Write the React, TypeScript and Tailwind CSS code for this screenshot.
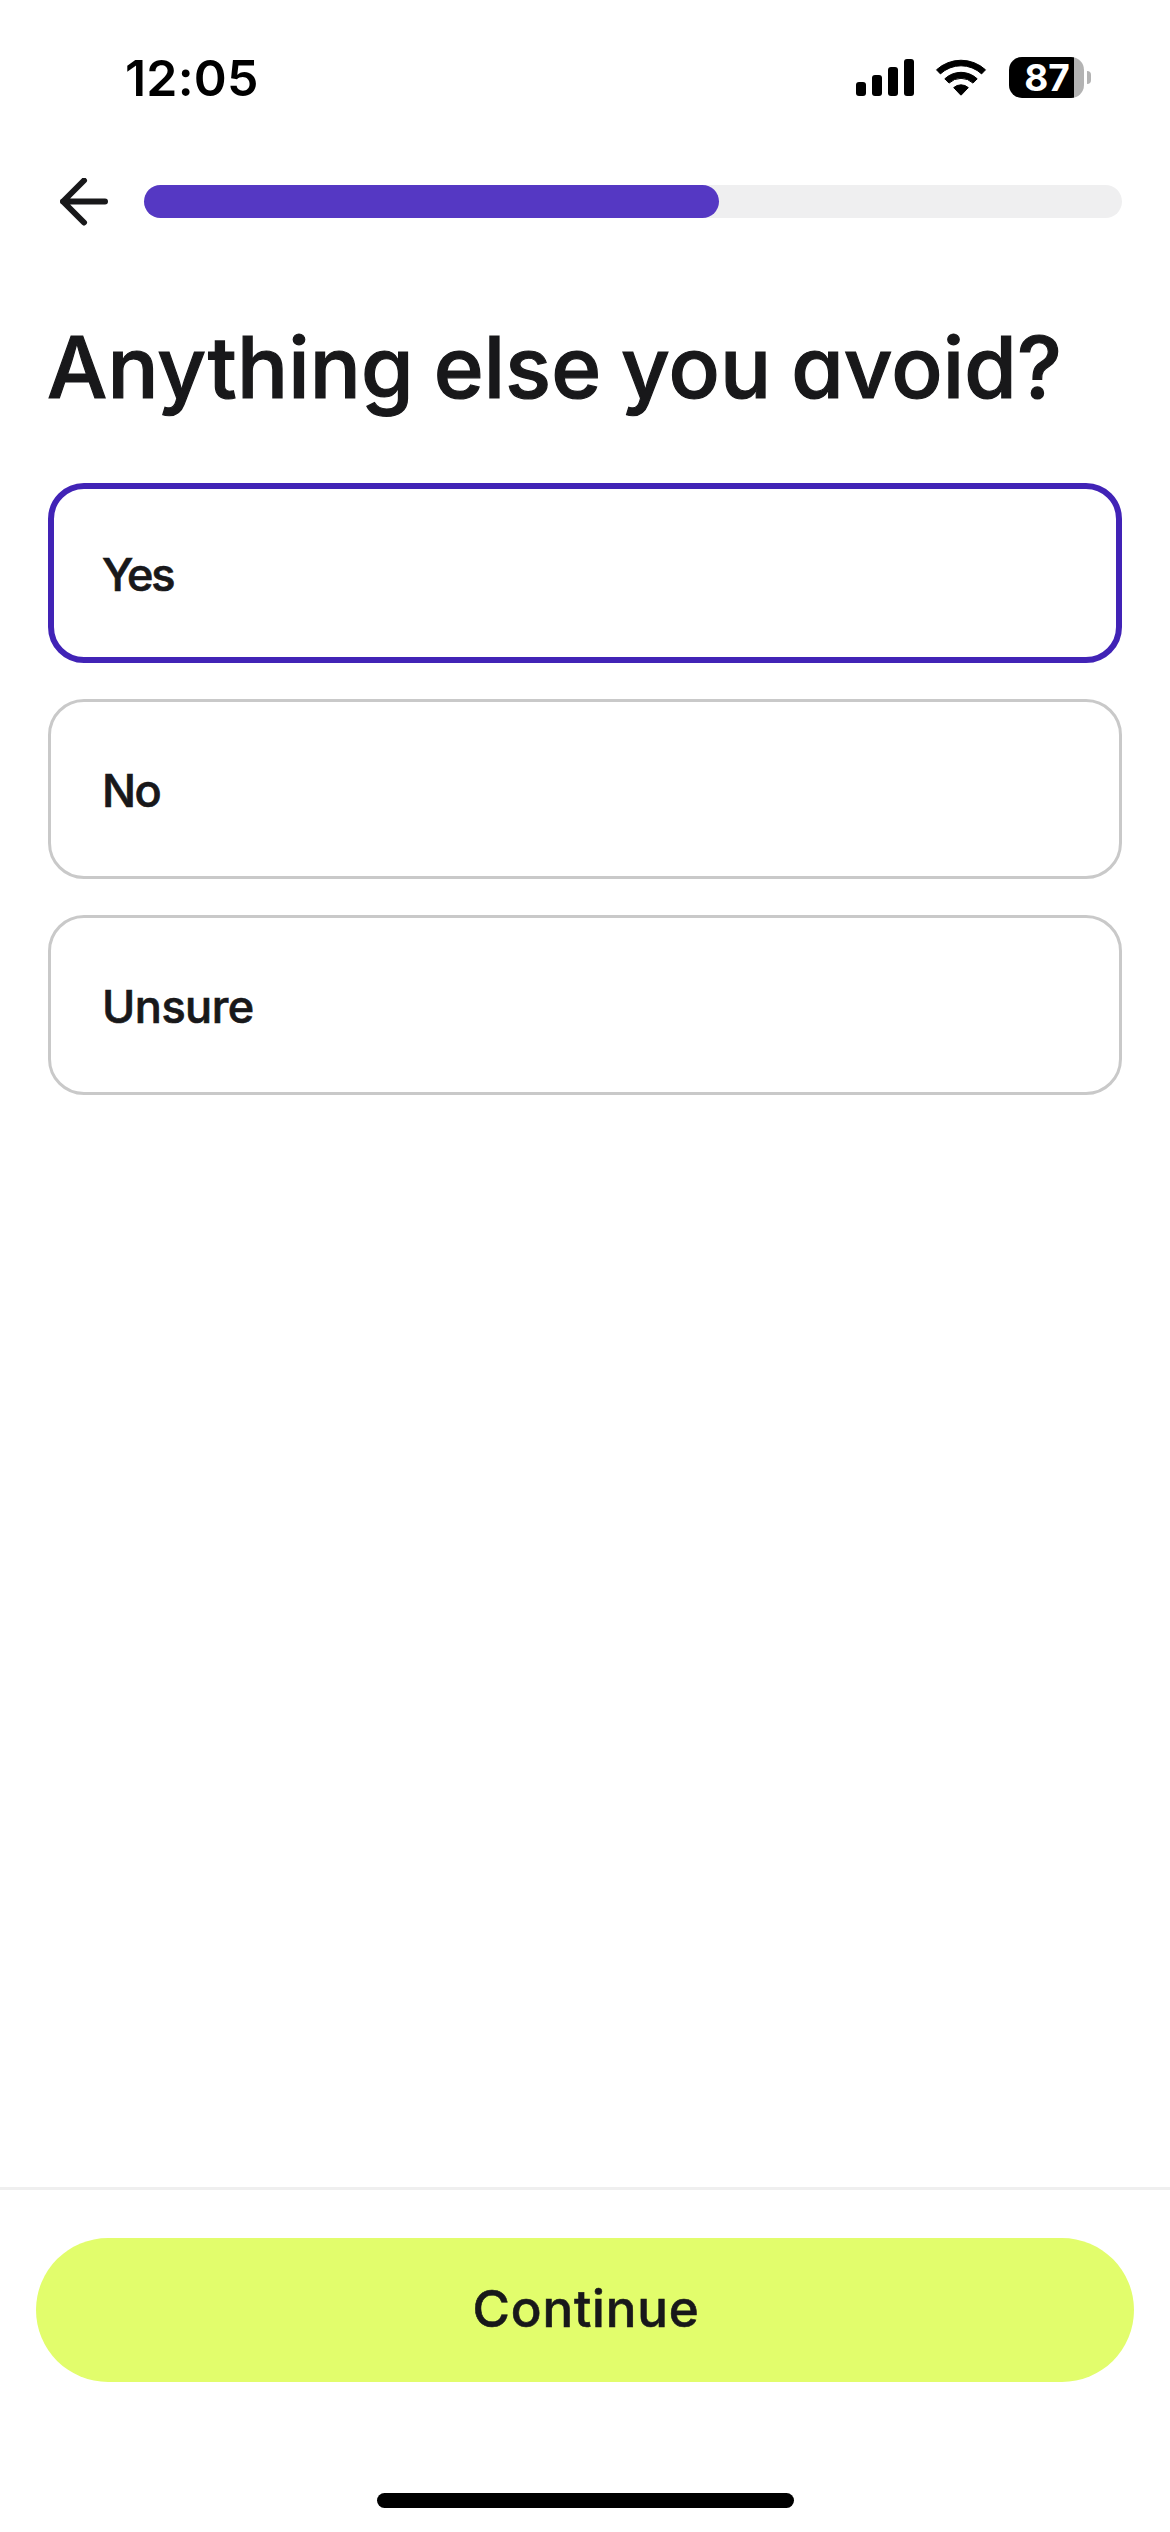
const options = [
  { label: "Yes", selected: true, tracking: "tracking-[-2.3px]" },
  { label: "No", selected: false, tracking: "tracking-[-1.6px]" },
  { label: "Unsure", selected: false, tracking: "tracking-[-0.5px]" },
];

function SignalIcon() {
  return (
    <svg className="h-[37px] w-[58px]" viewBox="0 0 58 37" fill="#000">
      <rect x="0" y="23" width="10" height="14" rx="3" />
      <rect x="16" y="16" width="10" height="21" rx="3" />
      <rect x="32" y="8" width="10" height="29" rx="3" />
      <rect x="48" y="0" width="10" height="37" rx="3" />
    </svg>
  );
}

function WifiIcon() {
  return (
    <svg
      className="ml-[22px] h-[37px] w-[50px] overflow-visible"
      viewBox="0 0 50 37"
      fill="#000"
      stroke="#000"
      strokeWidth="1"
      strokeLinejoin="round"
    >
      <path d="M0.5 10.8A36.2 36.2 0 0 1 49.5 10.8L45.6 14.9A30.2 30.2 0 0 0 4.4 14.9Z" />
      <path d="M8.8 19.8A23.5 23.5 0 0 1 41.2 19.8L37 24.1A17.5 17.5 0 0 0 13 24.1Z" />
      <path d="M17.7 28.6A11 11 0 0 1 32.3 28.6L25.4 35.9Q25 36.4 24.6 35.9Z" />
    </svg>
  );
}

function Battery() {
  return (
    <div className="ml-[23px] flex items-center">
      <div className="flex h-[41px] w-[75px] items-center justify-center rounded-[13px] bg-linear-to-r from-black from-[65px] to-[#b3b3b3] to-[65px] pl-[1px] text-[37px] leading-[41px] font-bold text-white">
        87
      </div>
      <div className="ml-[3px] h-[13px] w-[4px] rounded-r-full bg-[#b3b3b3]" />
    </div>
  );
}

function StatusBar() {
  return (
    <div className="flex h-[155px] shrink-0 items-center justify-between pr-[79px] pl-[125px]">
      <span className="text-[50px] leading-none font-semibold tracking-[0.2px] text-black">12:05</span>
      <div className="flex items-center">
        <SignalIcon />
        <WifiIcon />
        <Battery />
      </div>
    </div>
  );
}

function ProgressHeader() {
  return (
    <div className="flex h-[93px] shrink-0 items-center pr-12 pl-[60px]">
      <button aria-label="Back">
        <svg
          className="h-12 w-12"
          viewBox="0 0 48 48"
          fill="none"
          stroke="#18181a"
          strokeWidth="6"
          strokeLinecap="round"
          strokeLinejoin="round"
        >
          <path d="M45 23.5H3M24 2.5L3 23.5l21 21" />
        </svg>
      </button>
      <div className="ml-9 h-[33px] flex-1 rounded-full bg-[#efeff0]">
        <div className="h-full w-[575px] rounded-full bg-[#5538c3]" />
      </div>
    </div>
  );
}

export default function App() {
  return (
    <div className="flex h-[2532px] w-[1170px] flex-col bg-white font-['Inter',sans-serif] text-[#18181a] [font-feature-settings:'cv11']">
      <StatusBar />
      <ProgressHeader />
      <h1 className="mt-[77px] pl-[47px] text-[85px] leading-[85px] font-medium tracking-[0.15px] [word-spacing:-3px] whitespace-nowrap [-webkit-text-stroke:1.2px_#18181a]">
        Anything else you avoid?
      </h1>
      <div className="mt-[73px] flex flex-col gap-9 px-12">
        {options.map((option) => (
          <button
            key={option.label}
            className={`flex h-[180px] items-center rounded-[36px] pt-[2px] text-[45px] leading-none font-medium [-webkit-text-stroke:0.7px_#18181a] ${option.tracking} ${
              option.selected
                ? "border-[6px] border-[#4123b6] pl-12"
                : "border-[3px] border-[#c9c9c9] pl-[51px]"
            }`}
          >
            {option.label}
          </button>
        ))}
      </div>
      <div className="mt-auto flex h-[345px] shrink-0 flex-col items-center border-t-[3px] border-[#efefef] px-9 pt-12">
        <button className="h-36 w-full shrink-0 rounded-full bg-[#e2fd6c] pb-[3px] pl-[2px] text-[51px] leading-none font-medium tracking-[0.8px] [-webkit-text-stroke:0.6px_#18181a]">
          Continue
        </button>
        <div className="mt-[111px] h-[15px] w-[417px] shrink-0 rounded-full bg-black" />
      </div>
    </div>
  );
}
